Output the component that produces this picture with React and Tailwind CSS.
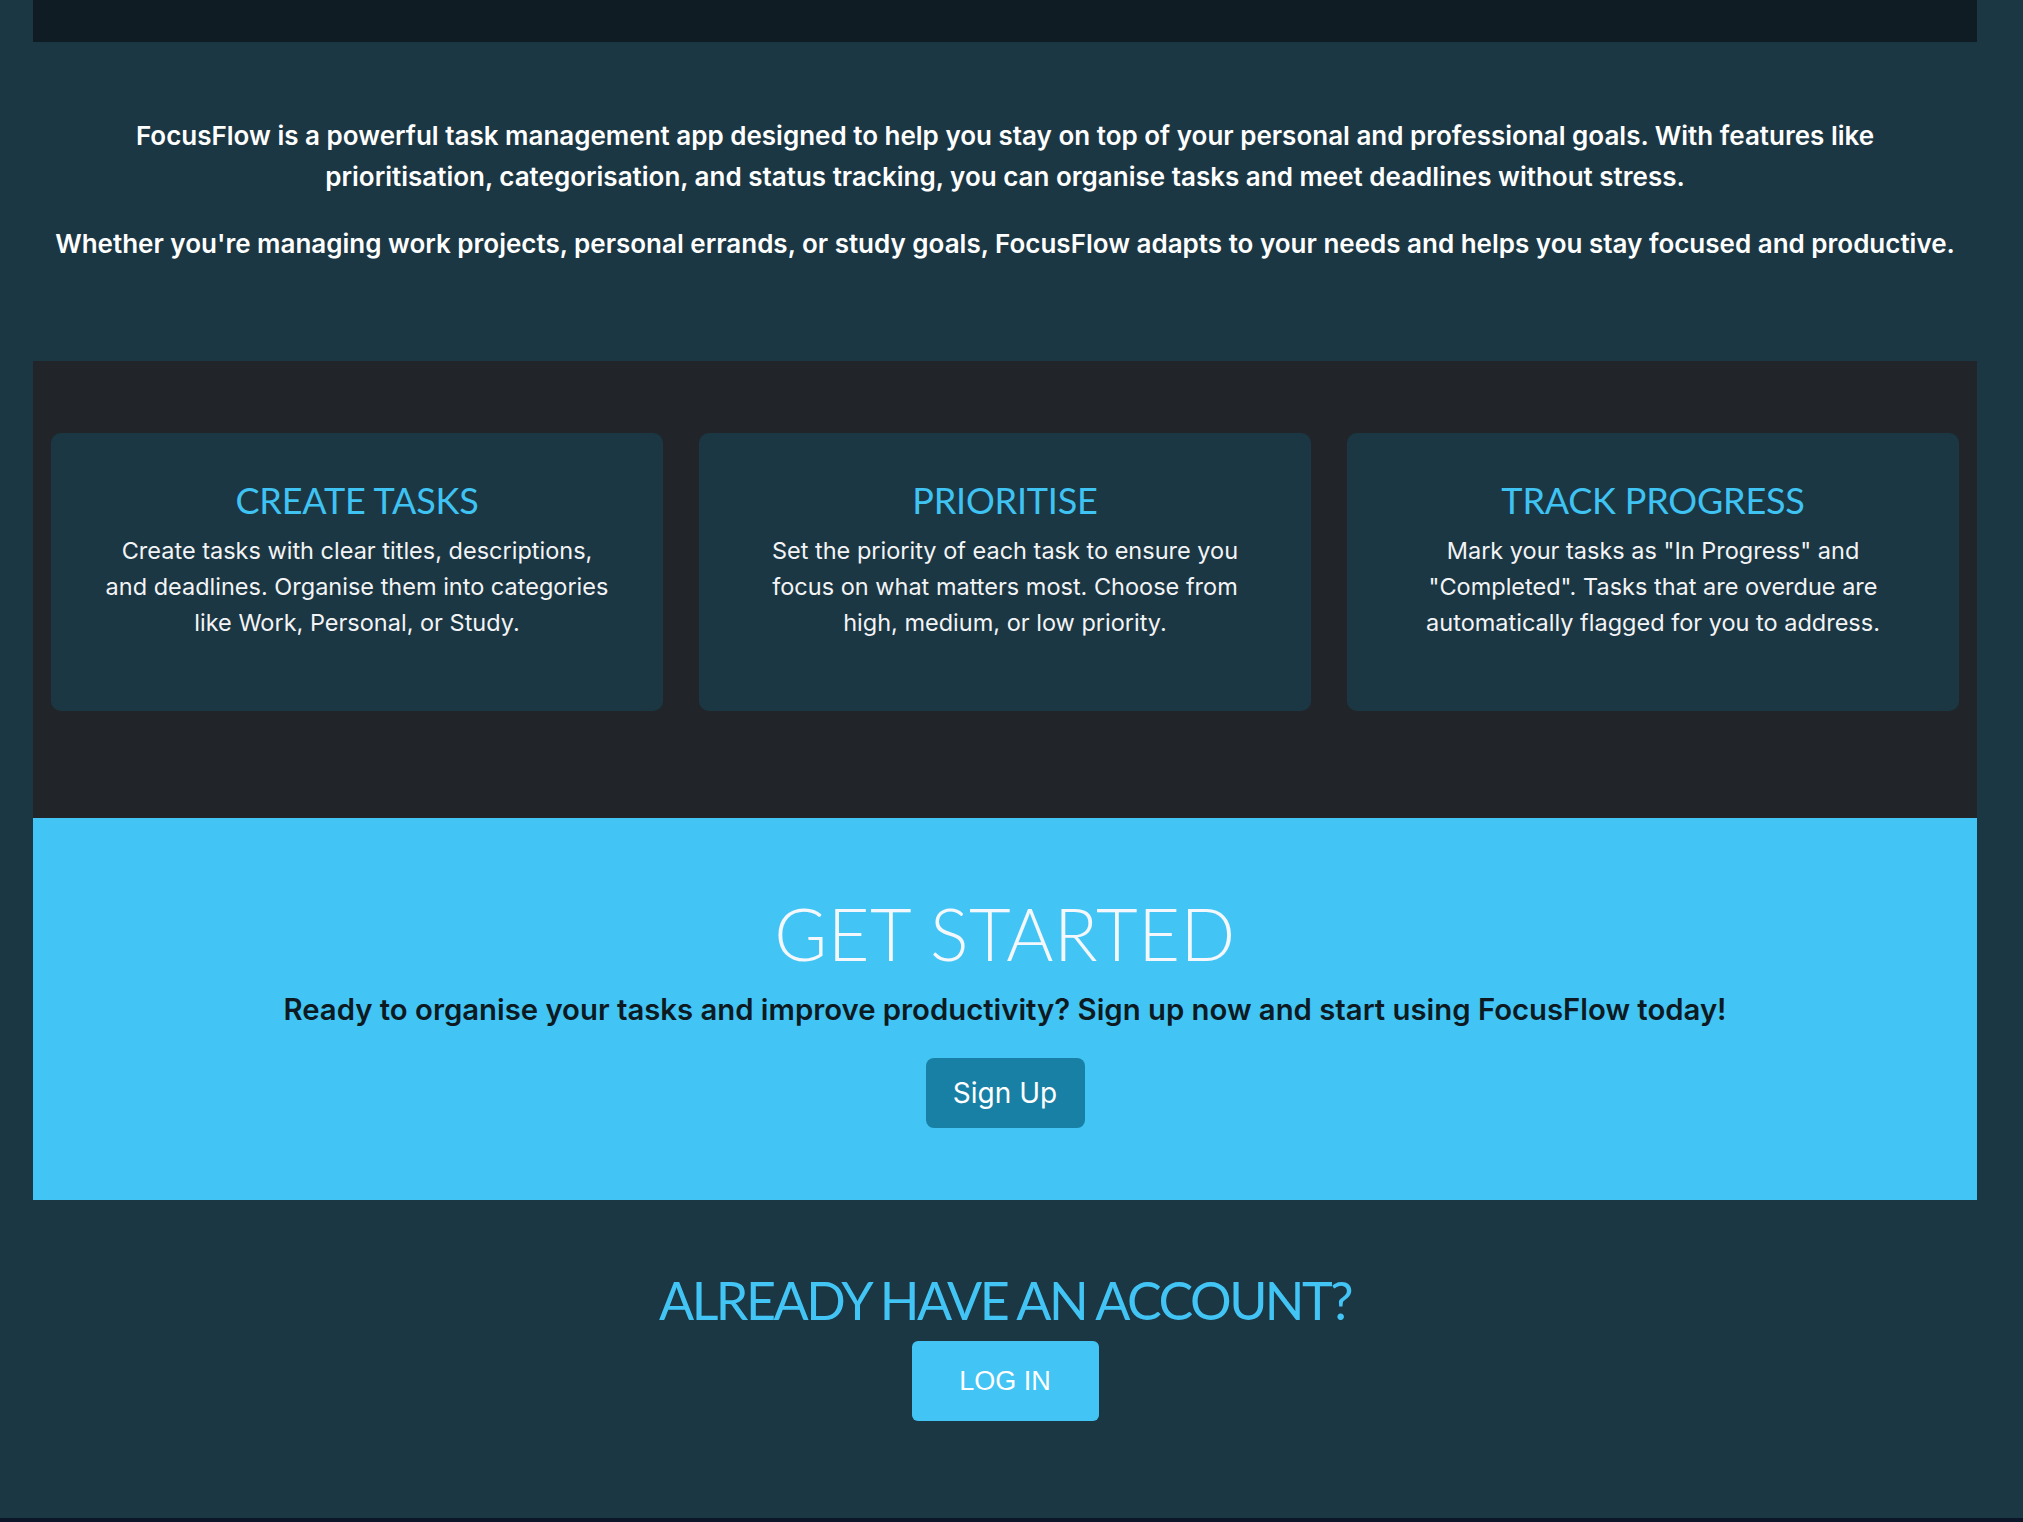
import React from "react";

function Card({ title, children }) {
  return (
    <div className="h-[278px] rounded-[10px] bg-[#1c3744] px-[50px] pt-[46px] text-center">
      <h3 className="font-['Lato',sans-serif] text-[36px] leading-[42px] font-normal text-[#3fc3f3] tracking-[-0.2px]">{title}</h3>
      <p className="mt-[12px] font-['Inter',sans-serif] text-[23.5px] leading-[36px] text-[#f3f4f6]">{children}</p>
    </div>
  );
}

export default function App() {
  return (
    <div className="min-h-screen bg-[#1c3744]">
      <div className="ml-[33px] w-[1944px]">
        <div className="h-[42px] bg-[#0f1c23]" />
        <section className="px-[14px] pt-[73px] pb-[97px] text-center font-['Inter',sans-serif] font-semibold text-white text-[26px] leading-[41px]">
          <p className="px-[58px]">
            FocusFlow is a powerful task management app designed to help you stay on top of your personal and professional goals. With features like prioritisation, categorisation, and status tracking, you can organise tasks and meet deadlines without stress.
          </p>
          <p className="mt-[26px]">
            Whether you're managing work projects, personal errands, or study goals, FocusFlow adapts to your needs and helps you stay focused and productive.
          </p>
        </section>
        <section className="bg-[#212529] px-[18px] pt-[72px] pb-[107px]">
          <div className="grid grid-cols-3 gap-[36px]">
            <Card title="CREATE TASKS">
              Create tasks with clear titles, descriptions, and deadlines. Organise them into categories like Work, Personal, or Study.
            </Card>
            <Card title="PRIORITISE">
              Set the priority of each task to ensure you focus on what matters most. Choose from high, medium, or low priority.
            </Card>
            <Card title="TRACK PROGRESS">
              Mark your tasks as "In Progress" and "Completed". Tasks that are overdue are automatically flagged for you to address.
            </Card>
          </div>
        </section>
        <section className="h-[382px] bg-[#42c5f5] pt-[77px] text-center">
          <h2 className="font-['Lato',sans-serif] font-light text-[72px] leading-[76px] text-[#f4f7fb] tracking-[0.5px]">GET STARTED</h2>
          <p className="mt-[21px] font-['Inter',sans-serif] font-semibold text-[29.3px] leading-[36px] text-[#0e1a22]">
            Ready to organise your tasks and improve productivity? Sign up now and start using FocusFlow today!
          </p>
          <button className="mt-[30px] h-[70px] w-[159px] rounded-[8px] bg-[#1880a5] font-['Inter',sans-serif] text-[28px] text-white">
            Sign Up
          </button>
        </section>
        <section className="h-[318px] pt-[74px] text-center">
          <h2 className="font-['Lato',sans-serif] font-normal text-[52px] leading-[52px] text-[#42c5f5] tracking-[-2.5px]">ALREADY HAVE AN ACCOUNT?</h2>
          <button className="mt-[15px] h-[80px] w-[187px] rounded-[6px] bg-[#42c5f5] font-['Liberation_Sans',Arial,sans-serif] text-[27px] text-white">
            LOG IN
          </button>
        </section>
      </div>
      <footer className="h-[60px] bg-[#0b1628]" />
    </div>
  );
}
